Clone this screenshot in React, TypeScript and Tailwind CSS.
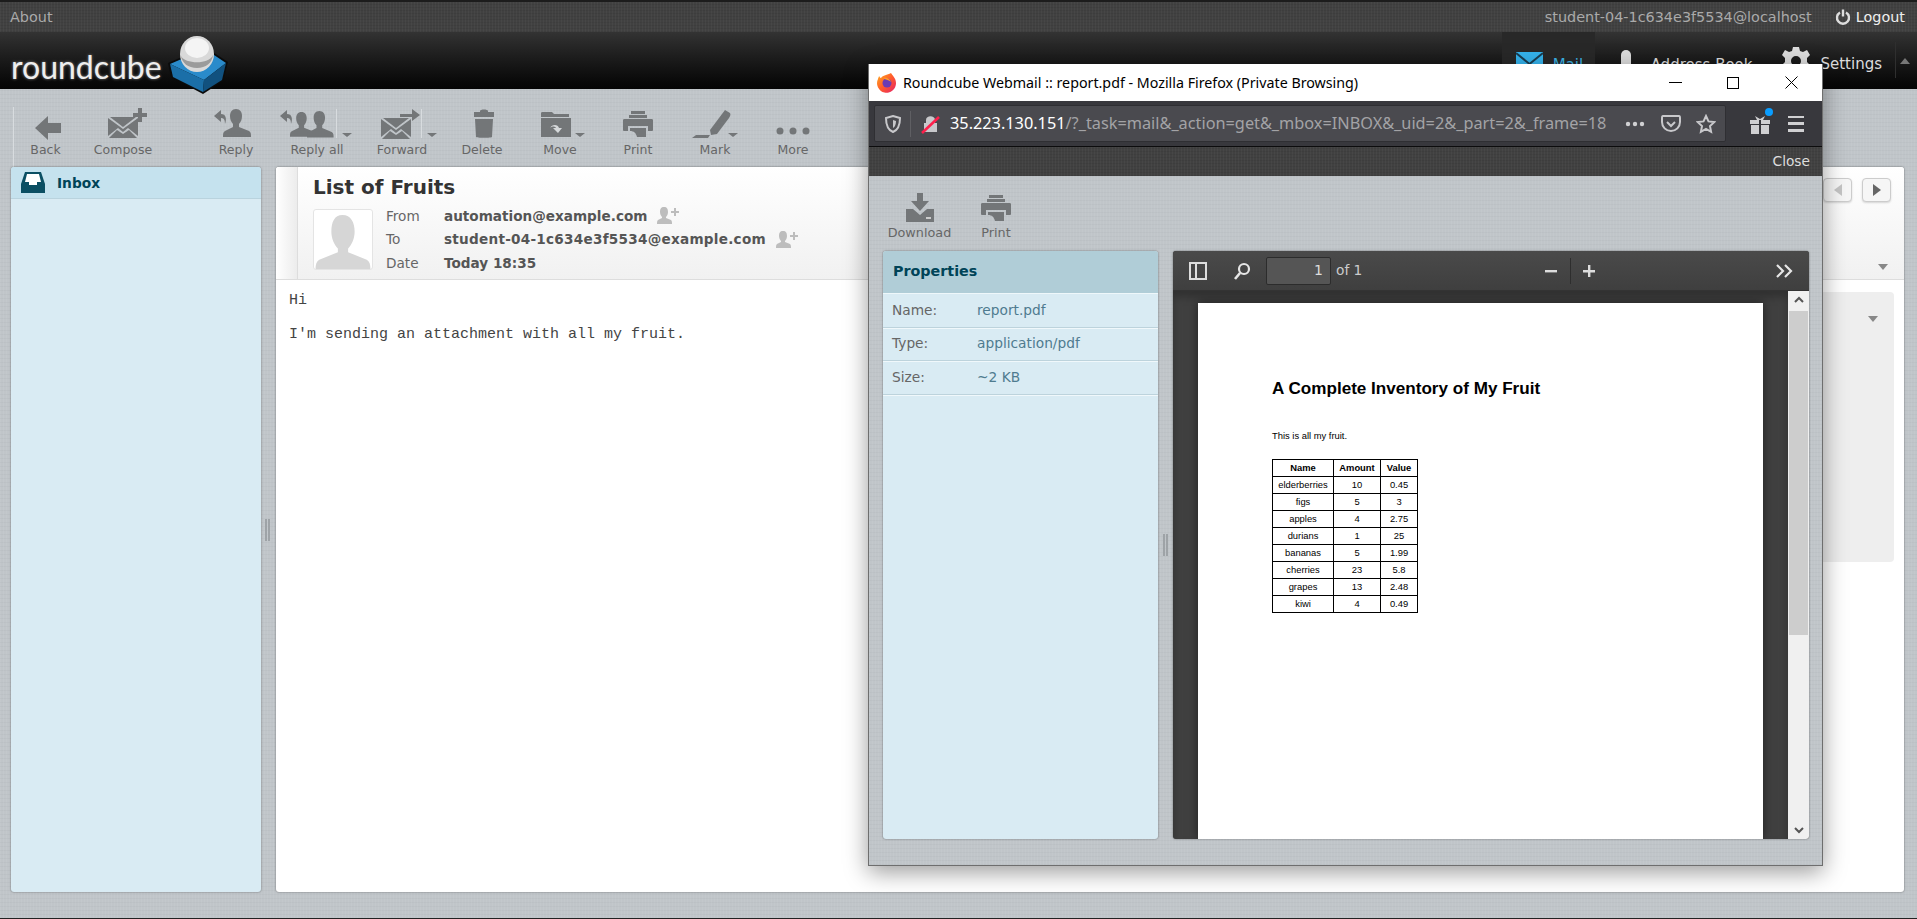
import React from 'react';

const verdana = 'font-["DejaVu_Sans",sans-serif]';
const linen =
  'bg-[#c0c5c9] bg-[repeating-linear-gradient(90deg,rgba(255,255,255,0.05)_0_1px,transparent_1px_3px),repeating-linear-gradient(0deg,rgba(0,0,0,0.025)_0_1px,transparent_1px_4px)]';
const darkLinen =
  'bg-[#414141] bg-[repeating-linear-gradient(90deg,rgba(255,255,255,0.03)_0_1px,transparent_1px_3px),repeating-linear-gradient(0deg,rgba(0,0,0,0.06)_0_1px,transparent_1px_3px)]';

const ICON = '#737678';
const HOOK = 'M8 1L1 7l7 6V9c3 0 4 2 4 6 2-5 1-10-4-10z';

const Person = ({ x = 0, y = 0, s = 1, fill = ICON }: { x?: number; y?: number; s?: number; fill?: string }) => (
  <path
    transform={`translate(${x} ${y}) scale(${s})`}
    fill={fill}
    d="M13 0c4 0 6 3 6 7 0 3-1 6-3 8v3l10 4c2 1 2 3 2 6H0c0-3 0-5 2-6l8-4v-3C8 13 7 10 7 7c0-4 2-7 6-7z"
  />
);

const Envelope = ({ x = 0, y = 0 }: { x?: number; y?: number }) => (
  <g transform={`translate(${x} ${y})`} fill={ICON}>
    <path d="M0 1l15 11L30 1v18l-10-8-5 4-5-4L0 19z" />
    <path d="M2 0h26L15 10z" />
    <path d="M1 21l8-8 6 4 6-4 8 8z" />
  </g>
);

const Tri = ({ x, y }: { x: number; y: number }) => (
  <path d={`M${x} ${y}h10l-5 4z`} fill={ICON} />
);

const BackIcon = () => (
  <svg width="31" height="34" viewBox="0 0 31 34">
    <path d="M5 21L18 9v7h13v10H18v7z" fill={ICON} />
  </svg>
);
const ComposeIcon = () => (
  <svg width="50" height="34" viewBox="0 0 50 34">
    <Envelope x={10} y={10} />
    <path d="M40 1h4v5h5v4h-5v5h-4v-5h-5V6h5z" fill={ICON} />
  </svg>
);
const ReplyIcon = () => (
  <svg width="47" height="34" viewBox="0 0 47 34">
    <Person x={10} y={2} />
    <path d={HOOK} transform="translate(0 2)" fill={ICON} />
  </svg>
);
const ReplyAllIcon = () => (
  <svg width="76" height="34" viewBox="0 0 76 34">
    <Person x={11} y={5} s={0.88} />
    <Person x={28} y={4} s={0.95} />
    <path d={HOOK} transform="translate(0 2)" fill={ICON} />
    <rect x="57" y="2" width="1" height="29" fill="#d8dcdf" />
    <Tri x={63} y={26} />
  </svg>
);
const ForwardIcon = () => (
  <svg width="70" height="34" viewBox="0 0 70 34">
    <Envelope x={14} y={11} />
    <path d="M33 7h12V2l8 6-8 6v-4H33z" fill={ICON} />
    <rect x="54" y="2" width="1" height="29" fill="#d8dcdf" />
    <Tri x={60} y={26} />
  </svg>
);
const DeleteIcon = () => (
  <svg width="28" height="34" viewBox="-4 0 28 34">
    <path d="M8 4c0-2 8-2 8 0v1h6v5H2V5h6z" fill={ICON} />
    <path d="M3 12h18l-1 18c0 1-16 1-16 0z" fill={ICON} />
  </svg>
);
const MoveIcon = () => (
  <svg width="50" height="34" viewBox="0 0 50 34">
    <path d="M6 6c0-1 1-1 2-1h9l2 2h15v3H6z" fill={ICON} />
    <path d="M6 11h30v19H6z" fill={ICON} />
    <path d="M15 21c2-4 8-4 9 0h3l-4 5-5-5h3c-1-2-4-2-6 0z" fill="#d5d8da" />
    <Tri x={40} y={26} />
  </svg>
);
const PrintShape = ({ fill = ICON }: { fill?: string }) => (
  <g fill={fill}>
    <rect x="8" y="0" width="14" height="3" />
    <rect x="6" y="4" width="18" height="3" />
    <path d="M0 9c0-1 1-1 2-1h26c1 0 2 0 2 1v10c0 1-1 1-2 1h-3v-5H5v5H2c-1 0-2 0-2-1z" />
    <path d="M7 17h16v9H14c-1-4-3-6-7-6z" />
  </g>
);
const PrintIcon = () => (
  <svg width="30" height="34" viewBox="0 -4 30 34">
    <PrintShape />
  </svg>
);
const MarkIcon = () => (
  <svg width="50" height="34" viewBox="0 0 50 34">
    <path d="M20 23l15-20 5 3c1 2 0 3-1 5L27 27l-6 1z" fill={ICON} />
    <path d="M2 31l4-3h14l-2 3z" fill={ICON} />
    <Tri x={38} y={26} />
  </svg>
);
const MoreIcon = () => (
  <svg width="34" height="34" viewBox="0 0 34 34">
    <circle cx="4" cy="24" r="3.5" fill={ICON} />
    <circle cx="17" cy="24" r="3.5" fill={ICON} />
    <circle cx="30" cy="24" r="3.5" fill={ICON} />
  </svg>
);

const toolbarItems = [
  { label: 'Back', icon: <BackIcon />, cls: 'w-[64px] border-l border-[#d8dcdf]' },
  { label: 'Compose', icon: <ComposeIcon />, cls: 'w-[78px] ml-[7px]' },
  { label: 'Reply', icon: <ReplyIcon />, cls: 'w-[78px] ml-[35px]' },
  { label: 'Reply all', icon: <ReplyAllIcon />, cls: 'w-[84px]' },
  { label: 'Forward', icon: <ForwardIcon />, cls: 'w-[84px] ml-px' },
  { label: 'Delete', icon: <DeleteIcon />, cls: 'w-[76px]' },
  { label: 'Move', icon: <MoveIcon />, cls: 'w-[80px]' },
  { label: 'Print', icon: <PrintIcon />, cls: 'w-[76px]' },
  { label: 'Mark', icon: <MarkIcon />, cls: 'w-[78px]' },
  { label: 'More', icon: <MoreIcon />, cls: 'w-[78px]' },
];

const RoundcubeLogo = () => (
  <svg width="62" height="60" viewBox="0 0 62 60" className="shrink-0">
    <path d="M1 28L38 12l23 15-5 19-20 13L4 42z" fill="#0b0b0b" />
    <path d="M3 29l35-15 21 14-22 17z" fill="#2a8bcb" />
    <path d="M3 29l34 16-1 12L6 42z" fill="#1b6fa8" />
    <path d="M37 45l22-17-4 17-19 12z" fill="#11517f" />
    <ellipse cx="30" cy="19" rx="17" ry="18" fill="#d9d9d9" />
    <ellipse cx="30" cy="13" rx="12" ry="10" fill="#f4f4f4" />
    <path d="M14 21c4 8 28 9 32-1-1 8-7 13-16 13S15 28 14 21z" fill="#9b9b9b" />
  </svg>
);

const AddContact = () => (
  <svg width="23" height="17" viewBox="0 0 23 17">
    <path d="M7 0c3 0 4 2 4 5 0 2-1 4-2 5v1l5 2c1 1 1 2 1 4H0c0-2 0-3 1-4l4-2v-1C4 9 3 7 3 5c0-3 1-5 4-5z" fill="#bdbdbd" />
    <path d="M17 1h2v3h3v2h-3v3h-2V6h-3V4h3z" fill="#bdbdbd" />
  </svg>
);

const HeaderRow = ({ label, value, add, valueClass }: { label: string; value: string; add?: boolean; valueClass?: string }) => (
  <div className="flex h-[23.5px] items-center">
    <span className="w-[58px] text-[#666]">{label}</span>
    <span className={`font-bold text-[#555] ${valueClass ?? ''}`}>{value}</span>
    {add && (
      <span className="ml-[10px]">
        <AddContact />
      </span>
    )}
  </div>
);

const Splitter = () => (
  <div className="flex h-[22px] w-[5px] justify-between">
    <div className="w-[2px] bg-[#9ea3a7]" />
    <div className="w-[2px] bg-[#9ea3a7]" />
  </div>
);

const fruits = [
  ['elderberries', '10', '0.45'],
  ['figs', '5', '3'],
  ['apples', '4', '2.75'],
  ['durians', '1', '25'],
  ['bananas', '5', '1.99'],
  ['cherries', '23', '5.8'],
  ['grapes', '13', '2.48'],
  ['kiwi', '4', '0.49'],
];

const FirefoxLogo = () => (
  <svg width="20" height="20" viewBox="0 0 20 20">
    <defs>
      <linearGradient id="ff" x1="0" y1="0" x2="1" y2="1">
        <stop offset="0" stopColor="#ffb01f" />
        <stop offset="0.5" stopColor="#ff5a2c" />
        <stop offset="1" stopColor="#e3216b" />
      </linearGradient>
    </defs>
    <path d="M14 0c1 2 5 5 5 10a9.5 9.5 0 1 1-18-4c0-1 1-2 1-3 1 1 1 2 2 2 2-3 6-3 10-5z" fill="url(#ff)" />
    <circle cx="10" cy="10" r="4.5" fill="#6b3bb5" />
    <path d="M6 5c3-1 7 0 8 4-2-2-5-2-8-4z" fill="#ff9a2c" />
  </svg>
);

const ReportPage = () => (
  <div className="h-full w-[565px] bg-white pl-[74px] pt-[75px] font-['Liberation_Sans',sans-serif] text-black shadow-[0_0_10px_rgba(0,0,0,0.5)]">
    <h1 className="text-[17.1px] font-bold leading-[22px]">A Complete Inventory of My Fruit</h1>
    <p className="mt-[30px] text-[9.4px] leading-[12px]">This is all my fruit.</p>
    <table className="mt-[17px] w-[145px] table-fixed border-collapse text-center text-[9.4px] leading-[16px]">
      <colgroup>
        <col className="w-[61px]" />
        <col className="w-[47px]" />
        <col className="w-[37px]" />
      </colgroup>
      <thead>
        <tr className="h-[17px]">
          <th className="border border-black p-0 font-bold">Name</th>
          <th className="border border-black p-0 font-bold">Amount</th>
          <th className="border border-black p-0 font-bold">Value</th>
        </tr>
      </thead>
      <tbody>
        {fruits.map((row) => (
          <tr key={row[0]} className="h-[17px]">
            {row.map((cell, i) => (
              <td key={i} className="border border-black p-0">
                {cell}
              </td>
            ))}
          </tr>
        ))}
      </tbody>
    </table>
  </div>
);

const PdfViewer = () => (
  <div className="flex h-[588px] w-[636px] flex-col overflow-hidden rounded-[3px] bg-[#404040] shadow-[0_0_2px_rgba(0,0,0,0.5)]">
    <div className="flex h-[40px] shrink-0 items-center border-b border-[#333] bg-gradient-to-b from-[#4a4a4a] to-[#3f3f3f] text-[#ddd]">
      <svg width="18" height="18" viewBox="0 0 18 18" className="ml-[16px]">
        <rect x="1" y="1" width="16" height="16" fill="none" stroke="#ddd" strokeWidth="2" />
        <rect x="6" y="1" width="2" height="16" fill="#ddd" />
      </svg>
      <svg width="18" height="18" viewBox="0 0 18 18" className="ml-[26px]">
        <circle cx="11" cy="7" r="5" fill="none" stroke="#e6e6e6" strokeWidth="2.2" />
        <path d="M7 11l-5 6" stroke="#e6e6e6" strokeWidth="2.6" />
      </svg>
      <div className="ml-[15px] flex h-[28px] w-[65px] items-center justify-end rounded-[2px] border border-[#2c2c2c] bg-[#555] pr-[7px] text-[14px]">
        1
      </div>
      <span className={`ml-[5px] text-[13.75px] text-[#ccc] ${verdana}`}>of 1</span>
      <svg width="14" height="14" viewBox="0 0 14 14" className="ml-[182px]">
        <rect x="1" y="6" width="12" height="2.4" fill="#ddd" />
      </svg>
      <div className="ml-[12px] h-[26px] w-px bg-[#2e2e2e]" />
      <svg width="14" height="14" viewBox="0 0 14 14" className="ml-[11px]">
        <path d="M6 1h2.4v5H13v2.4H8.4V13H6V8.4H1V6h5z" fill="#ddd" />
      </svg>
      <svg width="18" height="14" viewBox="0 0 18 14" className="ml-[180px]">
        <path d="M1 1l6 6-6 6M9 1l6 6-6 6" fill="none" stroke="#e6e6e6" strokeWidth="2.2" />
      </svg>
    </div>
    <div className="flex min-h-0 flex-1">
      <div className="flex-1 overflow-hidden pl-[25px] pt-[12px] shadow-[inset_0_6px_8px_rgba(0,0,0,0.25)]">
        <ReportPage />
      </div>
      <div className="flex w-[21px] shrink-0 flex-col items-center bg-[#f0f0f0]">
        <svg width="12" height="17" viewBox="0 0 12 17">
          <path d="M2 11l4-4 4 4" fill="none" stroke="#555" strokeWidth="2" />
        </svg>
        <div className="mt-[3px] h-[324px] w-[19px] bg-[#cdcdcd]" />
        <div className="flex-1" />
        <svg width="12" height="17" viewBox="0 0 12 17">
          <path d="M2 6l4 4 4-4" fill="none" stroke="#555" strokeWidth="2" />
        </svg>
      </div>
    </div>
  </div>
);

const PropertyRow = ({ label, value }: { label: string; value: string }) => (
  <div className="flex h-[33.5px] items-center border-b border-[#bdd3dc] pl-[9px] shadow-[0_1px_0_#f0f8fb]">
    <span className="w-[85px] text-[#666]">{label}</span>
    <span className="text-[#4f7b8f]">{value}</span>
  </div>
);

const PopupWindow = () => (
  <div className="absolute left-[868px] top-[64px] flex h-[802px] w-[955px] flex-col border-b border-r border-l border-[#6e6e6e] shadow-[0_6px_22px_rgba(0,0,0,0.4)]">
    {/* firefox title bar */}
    <div className="flex h-[37px] shrink-0 items-center bg-white font-['Noto_Sans',sans-serif] text-[14.25px] text-black">
      <div className="ml-[8px] mr-[6px] flex">
        <FirefoxLogo />
      </div>
      <span>Roundcube Webmail :: report.pdf - Mozilla Firefox (Private Browsing)</span>
      <div className="flex-1" />
      <div className="mr-[45px] h-px w-[13px] bg-black" />
      <div className="mr-[46px] h-[12px] w-[12px] border border-black" />
      <svg width="13" height="13" viewBox="0 0 13 13" className="mr-[24px]">
        <path d="M0.5 0.5l12 12M12.5 0.5l-12 12" stroke="#000" strokeWidth="1" />
      </svg>
    </div>
    {/* firefox address bar */}
    <div className="flex h-[46px] shrink-0 items-center border-b border-[#0c0c0d] bg-[#38383d] px-[5px]">
      <div className="flex h-[37px] w-[852px] items-center overflow-hidden rounded-[2px] border border-[#2f2f33] bg-[#4a4a4f]">
        <svg width="16" height="18" viewBox="0 0 16 18" className="ml-[10px]">
          <path d="M8 1l7 2c0 7-2 12-7 14C3 15 1 10 1 3z" fill="none" stroke="#c8c8cb" strokeWidth="2" />
          <path d="M8 5l3 1c0 3-1 6-3 7z" fill="#c8c8cb" />
        </svg>
        <div className="ml-[9px] h-[26px] w-px bg-[#5f5f63]" />
        <svg width="20" height="20" viewBox="0 0 20 20" className="ml-[10px]">
          <path d="M5 9V6c0-5 9-5 9 0v3h2v9H3V9z" fill="#c8c8cb" />
          <path d="M1 19L18 3" stroke="#ff1f4b" strokeWidth="2.5" />
        </svg>
        <div className="ml-[9px] w-[667px] overflow-hidden whitespace-nowrap font-['Noto_Sans',sans-serif] text-[16.3px] text-[#a3a3a6]">
          <span className="text-white">35.223.130.151</span>/?_task=mail&amp;_action=get&amp;_mbox=INBOX&amp;_uid=2&amp;_part=2&amp;_frame=18
        </div>
        <svg width="20" height="6" viewBox="0 0 20 6" className="ml-[8px]">
          <circle cx="3" cy="3" r="2.2" fill="#d0d0d2" />
          <circle cx="10" cy="3" r="2.2" fill="#d0d0d2" />
          <circle cx="17" cy="3" r="2.2" fill="#d0d0d2" />
        </svg>
        <svg width="20" height="18" viewBox="0 0 20 18" className="ml-[16px]">
          <path d="M2 1h16c1 0 1 1 1 2v4c0 5-4 9-9 9S1 12 1 7V3c0-1 0-2 1-2z" fill="none" stroke="#c8c8cb" strokeWidth="2" />
          <path d="M6 7l4 4 4-4" fill="none" stroke="#c8c8cb" strokeWidth="2" />
        </svg>
        <svg width="20" height="20" viewBox="0 0 20 20" className="ml-[15px]">
          <path d="M10 2l2.5 5.4 5.7.7-4.2 4 1.1 5.8L10 15l-5.1 2.9L6 12.1l-4.2-4 5.7-.7z" fill="none" stroke="#c8c8cb" strokeWidth="2" />
        </svg>
      </div>
      <div className="relative ml-[23px]">
        <svg width="22" height="20" viewBox="0 0 22 20" className="block">
          <path d="M1 6h9v4H1zM12 6h9v4h-9zM2 11h8v9H2zM12 11h8v9h-8z" fill="#d0d0d2" />
          <path d="M6 2l5 3 5-3-2 4H8z" fill="#d0d0d2" />
        </svg>
        <div className="absolute right-[-2px] top-[-6px] h-[8px] w-[8px] rounded-full bg-[#0a9dff]" />
      </div>
      <div className="ml-[17px] flex h-[16px] w-[16px] flex-col justify-between">
        <div className="h-[2.5px] bg-[#d0d0d2]" />
        <div className="h-[2.5px] bg-[#d0d0d2]" />
        <div className="h-[2.5px] bg-[#d0d0d2]" />
      </div>
    </div>
    {/* roundcube popup */}
    <div className={`flex h-[29px] shrink-0 items-center justify-end pr-[12px] text-[13.75px] text-[#ddd] ${darkLinen} ${verdana}`}>
      Close
    </div>
    <div className={`flex min-h-0 flex-1 flex-col ${linen} ${verdana} text-[13.75px]`}>
      <div className="flex h-[75px] shrink-0 pt-[17px] text-[12.8px] text-[#666]">
        <div className="ml-[18px] flex w-[65px] flex-col items-center">
          <svg width="30" height="30" viewBox="0 0 30 30">
            <path d="M12 0h6v8h6l-9 10L6 8h6z" fill={ICON} />
            <path d="M1 16h7l7 6 7-6h7v13H1z" fill={ICON} />
            <rect x="21" y="24" width="5" height="2" fill="#ccc" />
          </svg>
          <span className="mt-[2px] leading-[16px]">Download</span>
        </div>
        <div className="ml-[28px] flex w-[32px] flex-col items-center">
          <svg width="30" height="30" viewBox="0 -2 30 30">
            <PrintShape />
          </svg>
          <span className="mt-[2px] leading-[16px]">Print</span>
        </div>
      </div>
      <div className="flex items-start pl-[14px]">
        <div className="h-[588px] w-[275px] shrink-0 overflow-hidden rounded-[3px] bg-[#d9ebf3] shadow-[0_0_2px_rgba(0,0,0,0.5)]">
          <div className="flex h-[43px] items-center border-b border-[#eef7fa] bg-[#b0cdd7] pl-[10px] text-[14.3px] font-bold text-[#004458]">
            Properties
          </div>
          <PropertyRow label="Name:" value="report.pdf" />
          <PropertyRow label="Type:" value="application/pdf" />
          <PropertyRow label="Size:" value="~2 KB" />
        </div>
        <div className="flex h-[588px] w-[15px] shrink-0 items-center justify-center">
          <Splitter />
        </div>
        <PdfViewer />
      </div>
    </div>
  </div>
);

export default function App() {
  return (
    <div className={`relative flex h-[919px] w-[1917px] flex-col overflow-hidden ${linen} ${verdana}`}>
      {/* top line */}
      <div className={`flex h-[32px] shrink-0 items-center justify-between border-t-2 border-[#1c1c1c] pl-[10px] pr-[12px] pt-px text-[14.4px] ${darkLinen}`}>
        <span className="text-[#aaa]">About</span>
        <div className="flex items-center">
          <span className="text-[#aaa]">student-04-1c634e3f5534@localhost</span>
          <svg width="16" height="16" viewBox="0 0 16 16" className="ml-[23px]">
            <path d="M5 3.5a6 6 0 1 0 6 0" fill="none" stroke="#ddd" strokeWidth="2.4" />
            <rect x="6.8" y="0.5" width="2.4" height="7" fill="#ddd" />
          </svg>
          <span className="ml-[5px] text-[#eee]">Logout</span>
        </div>
      </div>
      {/* header */}
      <div className="flex h-[57px] shrink-0 bg-gradient-to-b from-[#333] to-[#050505]">
        <div className="ml-[11px] flex items-start">
          <span className="mt-[15px] font-['Lato',sans-serif] text-[32px] leading-[40px] text-[#eee] [text-shadow:0_0_3px_#888]">roundcube</span>
          <div className="ml-[5px] mt-[3px]">
            <RoundcubeLogo />
          </div>
        </div>
        <div className="flex-1" />
        <div className="flex h-full w-[93px] bg-[#282828] pl-[14px] pt-[20px] text-[15px] text-[#3cb4e7]">
          <svg width="27" height="20" viewBox="0 0 27 20">
            <rect width="27" height="20" fill="#35b4ee" />
            <path d="M0 1l13.5 11L27 1" fill="none" stroke="#1a3e52" strokeWidth="2" />
          </svg>
          <span className="ml-[10px] mt-[2px]">Mail</span>
        </div>
        <div className="ml-[26px] flex h-full pt-[18px] text-[15px] text-[#ddd]">
          <div className="h-[24px] w-[10px] rounded-full bg-[#ddd]" />
          <span className="ml-[20px] mt-[4px]">Address Book</span>
        </div>
        <div className="ml-[30px] flex h-full pt-[15px] text-[15px] text-[#ddd]">
          <svg width="28" height="28" viewBox="0 0 28 28">
            <path
              fill="#ddd"
              fillRule="evenodd"
              d="M11 0h6l1 4 3 1 4-2 3 5-3 3v4l3 3-3 5-4-2-3 1-1 4h-6l-1-4-3-1-4 2-3-5 3-3v-4L0 8l3-5 4 2 3-1zM14 9a5 5 0 1 0 0 10 5 5 0 0 0 0-10z"
            />
          </svg>
          <span className="ml-[10px] mt-[6px]">Settings</span>
        </div>
        <div className="ml-[13px] mt-[10px] h-[36px] w-px bg-[#2f2f2f]" />
        <svg width="10" height="6" viewBox="0 0 10 6" className="ml-[4px] mr-[7px] mt-[26px]">
          <path d="M5 0l5 6H0z" fill="#777" />
        </svg>
      </div>
      {/* toolbar */}
      <div className="flex h-[78px] shrink-0 pl-[13px] pt-[18px] text-[12.5px] text-[#666]">
        {toolbarItems.map((item) => (
          <div key={item.label} className={`flex flex-col items-center ${item.cls}`}>
            <div className="flex h-[34px] items-end">{item.icon}</div>
            <span className="mt-px whitespace-nowrap leading-[16px]">{item.label}</span>
          </div>
        ))}
      </div>
      {/* main */}
      <div className="flex h-[725px] shrink-0 pl-[11px]">
        <div className="w-[250px] shrink-0 overflow-hidden rounded-[3px] bg-[#d9ebf3] shadow-[0_0_2px_rgba(0,0,0,0.5)]">
          <div className="flex h-[32px] items-center border-b border-[#b9d3de] bg-[#c5e2ee] pl-[10px] text-[13.75px] font-bold text-[#004458]">
            <svg width="24" height="21" viewBox="0 0 24 21">
              <path d="M4 0h16l4 12v9H0v-9z" fill="#0b4f63" />
              <path d="M6 2h12l2 8h-4v3H8v-3H4z" fill="#fff" />
            </svg>
            <span className="ml-[12px] pt-[2px]">Inbox</span>
          </div>
        </div>
        <div className="flex w-[15px] shrink-0 items-center justify-center pr-[2px]">
          <Splitter />
        </div>
        <div className="flex w-[1628px] shrink-0 flex-col overflow-hidden rounded-[3px] bg-white shadow-[0_0_2px_rgba(0,0,0,0.5)]">
          <div className="flex h-[113px] shrink-0 border-b border-[#ddd] bg-gradient-to-b from-white to-[#f1f1f1]">
            <div className="w-[22px] shrink-0 border-r border-[#ddd] bg-gradient-to-r from-white to-[#ececec]" />
            <div className="pl-[15px] pt-[6px]">
              <h2 className="text-[20px] font-bold leading-[28px] text-[#333]">List of Fruits</h2>
              <div className="mt-[3px] flex text-[13.6px]">
                <div className="mt-[5px] flex h-[61px] w-[60px] items-end justify-center overflow-hidden rounded-[3px] border border-[#e4e4e4] bg-white">
                  <svg width="58" height="54" viewBox="0 0 59 58">
                    <path
                      d="M29 0c9 0 13 8 13 18 0 7-3 14-7 18v4l20 8c3 2 4 5 4 10H0c0-5 1-8 4-10l20-8v-4c-4-4-7-11-7-18C17 8 20 0 29 0z"
                      fill="#d6d6d6"
                    />
                  </svg>
                </div>
                <div className="ml-[13px] flex flex-col">
                  <HeaderRow label="From" value="automation@example.com" add />
                  <HeaderRow label="To" value="student-04-1c634e3f5534@example.com" add valueClass="tracking-[0.25px]" />
                  <HeaderRow label="Date" value="Today 18:35" />
                </div>
              </div>
            </div>
            <div className="flex-1" />
            <div className="flex flex-col items-end pr-[13px] pt-[11px]">
              <div className="flex gap-[10px]">
                <div className="flex h-[24px] w-[29px] items-center justify-center rounded-[4px] border border-[#ccc] bg-[#f6f6f6] shadow-[0_1px_2px_rgba(0,0,0,0.15)]">
                  <svg width="8" height="12" viewBox="0 0 8 12">
                    <path d="M8 0v12L0 6z" fill="#c4c4c4" />
                  </svg>
                </div>
                <div className="flex h-[24px] w-[29px] items-center justify-center rounded-[4px] border border-[#ccc] bg-[#f6f6f6] shadow-[0_1px_2px_rgba(0,0,0,0.15)]">
                  <svg width="8" height="12" viewBox="0 0 8 12">
                    <path d="M0 0v12l8-6z" fill="#666" />
                  </svg>
                </div>
              </div>
              <svg width="10" height="6" viewBox="0 0 10 6" className="mr-[3px] mt-[62px]">
                <path d="M0 0h10L5 6z" fill="#888" />
              </svg>
            </div>
          </div>
          <div className="flex min-h-0 flex-1 justify-between pl-[13px]">
            <div className="pt-[12px] font-['Liberation_Mono',monospace] text-[15px] leading-[17px] text-[#444]">
              <p>Hi</p>
              <p className="mt-[17px]">I'm sending an attachment with all my fruit.</p>
            </div>
            <div className="mr-[10px] mt-[12px] flex h-[270px] w-[300px] justify-end rounded-[4px] bg-[#eeeeee] pr-[16px] pt-[24px]">
              <svg width="10" height="6" viewBox="0 0 10 6">
                <path d="M0 0h10L5 6z" fill="#888" />
              </svg>
            </div>
          </div>
        </div>
      </div>
      <div className="flex-1" />
      <div className="h-px shrink-0 bg-[#222]" />
      <PopupWindow />
    </div>
  );
}
